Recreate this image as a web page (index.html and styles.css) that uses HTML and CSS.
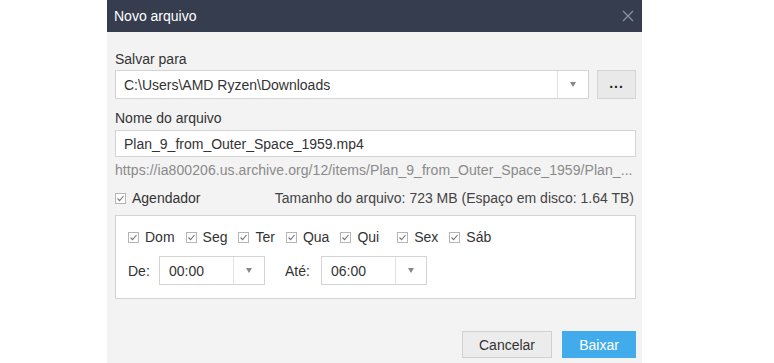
FILE: index.html
```html
<!DOCTYPE html>
<html lang="pt">
<head>
<meta charset="utf-8"/>
<title>Novo arquivo</title>
<link rel="stylesheet" href="styles.css">
</head>
<body>
<div class="dialog">
  <div class="titlebar">
    <span class="title">Novo arquivo</span>
    <svg class="close" width="12" height="12" viewBox="0 0 12 12"><path d="M1 1L11 11M11 1L1 11" stroke="#8a90a0" stroke-width="1.4"/></svg>
  </div>
  <div class="content">
    <label class="field-label">Salvar para</label>
    <div class="path-row">
      <div class="select path">
        <span class="value">C:\Users\AMD Ryzen\Downloads</span>
        <span class="arrow"><i></i></span>
      </div>
      <button class="browse">...</button>
    </div>

    <label class="field-label second">Nome do arquivo</label>
    <div class="textbox">Plan_9_from_Outer_Space_1959.mp4</div>
    <div class="url">https://ia800206.us.archive.org/12/items/Plan_9_from_Outer_Space_1959/Plan_...</div>

    <div class="sched-row">
      <span class="check"><span class="box"><svg width="9" height="9" viewBox="0 0 9 9"><path d="M1.5 4.5L3.6 6.6L7.5 2" fill="none" stroke="#777" stroke-width="1.1"/></svg></span>Agendador</span>
      <span class="size">Tamanho do arquivo: 723 MB (Espaço em disco: 1.64 TB)</span>
    </div>

    <div class="schedule">
      <div class="days">
        <span class="check"><span class="box"><svg width="9" height="9" viewBox="0 0 9 9"><path d="M1.5 4.5L3.6 6.6L7.5 2" fill="none" stroke="#777" stroke-width="1.1"/></svg></span>Dom</span>
        <span class="check"><span class="box"><svg width="9" height="9" viewBox="0 0 9 9"><path d="M1.5 4.5L3.6 6.6L7.5 2" fill="none" stroke="#777" stroke-width="1.1"/></svg></span>Seg</span>
        <span class="check"><span class="box"><svg width="9" height="9" viewBox="0 0 9 9"><path d="M1.5 4.5L3.6 6.6L7.5 2" fill="none" stroke="#777" stroke-width="1.1"/></svg></span>Ter</span>
        <span class="check"><span class="box"><svg width="9" height="9" viewBox="0 0 9 9"><path d="M1.5 4.5L3.6 6.6L7.5 2" fill="none" stroke="#777" stroke-width="1.1"/></svg></span>Qua</span>
        <span class="check wide"><span class="box"><svg width="9" height="9" viewBox="0 0 9 9"><path d="M1.5 4.5L3.6 6.6L7.5 2" fill="none" stroke="#777" stroke-width="1.1"/></svg></span>Qui</span>
        <span class="check"><span class="box"><svg width="9" height="9" viewBox="0 0 9 9"><path d="M1.5 4.5L3.6 6.6L7.5 2" fill="none" stroke="#777" stroke-width="1.1"/></svg></span>Sex</span>
        <span class="check"><span class="box"><svg width="9" height="9" viewBox="0 0 9 9"><path d="M1.5 4.5L3.6 6.6L7.5 2" fill="none" stroke="#777" stroke-width="1.1"/></svg></span>Sáb</span>
      </div>
      <div class="times">
        <span class="time-label">De:</span>
        <div class="select time">
          <span class="value">00:00</span>
          <span class="arrow"><i></i></span>
        </div>
        <span class="time-label until">Até:</span>
        <div class="select time">
          <span class="value">06:00</span>
          <span class="arrow"><i></i></span>
        </div>
      </div>
    </div>

    <div class="actions">
      <button class="btn cancel">Cancelar</button>
      <button class="btn primary">Baixar</button>
    </div>
  </div>
</div>
</body>
</html>
```

FILE: styles.css
```css
body { margin: 0; background: #ffffff; font-family: "Liberation Sans", Arial, sans-serif; font-size: 14px; color: #333; }
.dialog { margin-left: 107px; width: 535px; height: 363px; background: #f3f3f3; overflow: hidden; }
.titlebar { height: 32px; background: #363d4e; display: flex; align-items: center; justify-content: space-between; padding: 0 8px 0 7px; }
.title { color: #fff; font-size: 14px; margin-top: -1px; }
.content { padding: 18px 6px 0 8px; }
.field-label { display: block; line-height: 18px; margin-bottom: 2px; }
.field-label.second { margin-top: 10px; margin-bottom: 3px; }
.path-row { display: flex; gap: 8px; }
.select { display: flex; align-items: stretch; background: #fff; border: 1px solid #d4d4d4; box-sizing: border-box; }
.select .value { flex: 1; display: flex; align-items: center; padding-left: 8px; }
.select .arrow { width: 30px; border-left: 1px solid #e2e2e2; display: flex; align-items: center; justify-content: center; }
.select .arrow i { width: 0; height: 0; border-left: 3px solid transparent; border-right: 3px solid transparent; border-top: 5px solid #888; }
.path { width: 475px; height: 29px; }
.browse { width: 39px; height: 29px; border: 1px solid #d4d4d4; background: #e9e9e9; color: #222; font-size: 14px; font-weight: bold; letter-spacing: 1px; padding: 0 0 4px; font-family: inherit; }
.textbox { height: 27px; box-sizing: border-box; background: #fff; border: 1px solid #d4d4d4; padding-left: 8px; display: flex; align-items: center; }
.url { color: #8a8a8a; line-height: 18px; margin-top: 4px; white-space: nowrap; overflow: hidden; letter-spacing: 0.07px; }
.sched-row { display: flex; justify-content: space-between; align-items: center; margin-top: 10px; line-height: 18px; padding-right: 2px; }
.check { display: inline-flex; align-items: center; }
.box { width: 11px; height: 11px; border: 1px solid #b5b5b5; background: #fff; box-sizing: border-box; display: inline-flex; align-items: center; justify-content: center; margin-right: 6px; }
.size { color: #444; }
.schedule { margin-top: 8px; height: 84px; box-sizing: border-box; background: #fff; border: 1px solid #d4d4d4; padding: 12px 11px 0 12px; }
.days { display: flex; gap: 11px; line-height: 18px; }
.days .wide { margin-right: 7px; }
.times { display: flex; align-items: center; margin-top: 10px; }
.time-label { width: 31px; }
.time-label.until { width: 20px; margin-left: 20px; margin-right: 16px; }
.time { width: 106px; height: 29px; }
.time .value { padding-left: 9px; }
.actions { display: flex; justify-content: flex-end; gap: 10px; margin-top: 32px; }
.btn { height: 27px; font-family: inherit; font-size: 14px; border: 1px solid #d0d0d0; box-sizing: border-box; }
.cancel { width: 90px; background: #ececec; color: #333; }
.primary { width: 74px; background: #42abec; border-color: #42abec; color: #fff; }
```
